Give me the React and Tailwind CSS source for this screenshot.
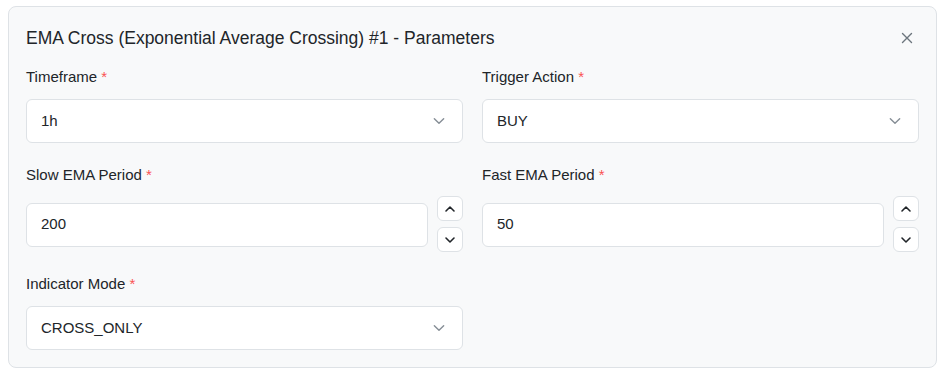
const F = { fontFamily: '"Liberation Sans", Arial, sans-serif' };

function Chevron({ up, className }) {
  return (
    <svg viewBox="0 0 12 12" className={className} fill="none" stroke="currentColor" strokeLinecap="round" strokeLinejoin="round">
      {up ? <path d="M2 8l4-4 4 4" /> : <path d="M2 4l4 4 4-4" />}
    </svg>
  );
}

function Label({ children }) {
  return (
    <div className="text-[15px] leading-5 text-[#212529] mb-3">
      {children} <span className="text-[#fa5252]">*</span>
    </div>
  );
}

function Select({ value }) {
  return (
    <div className="h-[44px] bg-white border border-[#dee2e6] rounded-md flex items-center justify-between pl-[14px] pr-[16px]">
      <span className="text-[15px] text-[#212529]">{value}</span>
      <Chevron className="w-[14px] h-[14px] text-[#868e96] stroke-[1.2]" />
    </div>
  );
}

function NumberField({ value }) {
  return (
    <div className="flex items-center gap-[9px]">
      <div className="flex-1 h-[44px] bg-white border border-[#dee2e6] rounded-md flex items-center pl-[14px]">
        <span className="text-[15px] text-[#212529]">{value}</span>
      </div>
      <div className="flex flex-col gap-[6px] -mt-[1px]">
        <button className="w-[26px] h-[25px] bg-white border border-[#dee2e6] rounded-md flex items-center justify-center text-[#212529]">
          <Chevron up className="w-[12px] h-[12px] stroke-[1.6]" />
        </button>
        <button className="w-[26px] h-[25px] bg-white border border-[#dee2e6] rounded-md flex items-center justify-center text-[#212529]">
          <Chevron className="w-[12px] h-[12px] stroke-[1.6]" />
        </button>
      </div>
    </div>
  );
}

export default function App() {
  return (
    <div className="w-[945px] h-[376px] bg-white pt-[6px] px-2" style={F}>
      <div className="h-[362px] bg-[#f8f9fa] border border-[#dee2e6] rounded-lg px-[17px] pt-[19px]">
        <div className="flex items-center justify-between mb-[17px]">
          <h2 className="text-[17.5px] leading-6 text-[#212529]">EMA Cross (Exponential Average Crossing) #1 - Parameters</h2>
          <svg viewBox="0 0 12 12" className="w-[12px] h-[12px] mr-[6px] text-[#6c757d]" fill="none" stroke="currentColor" strokeWidth="1.4" strokeLinecap="round">
            <path d="M1.5 1.5l9 9M10.5 1.5l-9 9" />
          </svg>
        </div>
        <div className="grid grid-cols-2 gap-x-[19px] gap-y-[22px]">
          <div>
            <Label>Timeframe</Label>
            <Select value="1h" />
          </div>
          <div>
            <Label>Trigger Action</Label>
            <Select value="BUY" />
          </div>
          <div>
            <Label>Slow EMA Period</Label>
            <NumberField value="200" />
          </div>
          <div>
            <Label>Fast EMA Period</Label>
            <NumberField value="50" />
          </div>
          <div>
            <Label>Indicator Mode</Label>
            <Select value="CROSS_ONLY" />
          </div>
        </div>
      </div>
    </div>
  );
}
